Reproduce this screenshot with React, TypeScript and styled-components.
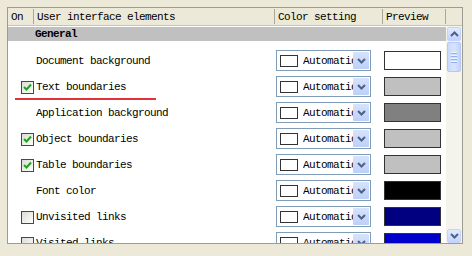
import React from 'react';
import styled, { createGlobalStyle } from 'styled-components';

const GlobalStyle = createGlobalStyle`
    body {
        margin: 0;
        background: #ECE9D8;
        font-family: "Liberation Mono", "DejaVu Sans Mono", monospace;
        font-size: 11px;
        letter-spacing: -0.6px;
        color: #000;
    }
`;

const COLUMNS = '26px 241px 108px 63px 1fr';

const Frame = styled.div`
    margin: 7px 0 0 7px;
    width: 454px;
    height: 235px;
    border: 1px solid #9C9C94;
    background: #fff;
    display: flex;
    flex-direction: column;
    overflow: hidden;
`;

const Header = styled.div`
    display: grid;
    grid-template-columns: ${COLUMNS};
    height: 17px;
    background: #ECE9D8;
    border-bottom: 1px solid #C7C5B2;
    flex-shrink: 0;
`;

const HeaderCell = styled.div<{ $last?: boolean }>`
    display: flex;
    align-items: center;
    padding-left: 3px;
    padding-top: 1px;
    border-right: ${p => (p.$last ? 'none' : '1px solid #ACA899')};
    margin: 1px 0;
    white-space: nowrap;
`;

const Body = styled.div`
    display: flex;
    flex: 1;
    min-height: 0;
`;

const List = styled.div`
    flex: 1;
    overflow: hidden;
`;

const GroupRow = styled.div`
    height: 14px;
    background: #C0C0C0;
    font-weight: bold;
    display: flex;
    align-items: center;
    padding-left: 27px;
    margin-top: 1px;
    margin-bottom: 8px;
`;

const Row = styled.div`
    display: grid;
    grid-template-columns: 26px 241px 108px 63px;
    height: 26px;
    align-items: start;
    position: relative;
`;

const CheckCell = styled.div`
    display: flex;
    justify-content: flex-end;
    padding-top: 6px;
`;

const Checkbox = styled.div`
    width: 11px;
    height: 11px;
    border: 1px solid #1C5180;
    background: linear-gradient(135deg, #DCDCD7 0%, #F4F4F0 70%, #FFFFFF 100%);
    display: flex;
    align-items: center;
    justify-content: center;
`;

const Label = styled.div`
    padding-left: 2px;
    padding-top: 6px;
    white-space: nowrap;
`;

const Underline = styled.div`
    position: absolute;
    left: 7px;
    top: 23px;
    width: 141px;
    height: 2px;
    background: #E2333A;
`;

const Combo = styled.div`
    margin-left: 1px;
    width: 93px;
    height: 19px;
    margin-top: 1px;
    border: 1px solid #7F9DB9;
    display: flex;
    align-items: center;
    overflow: hidden;
    background: #fff;
`;

const ComboSwatch = styled.div`
    width: 16px;
    height: 10px;
    border: 1px solid #333;
    margin-left: 3px;
    margin-right: 5px;
    flex-shrink: 0;
`;

const ComboText = styled.div`
    flex: 1;
    overflow: hidden;
    white-space: nowrap;
`;

const DropButton = styled.div`
    width: 16px;
    height: 17px;
    margin-right: 1px;
    background: linear-gradient(180deg, #D6E3FD 0%, #BCD0F8 100%);
    border-radius: 1px;
    display: flex;
    align-items: center;
    justify-content: center;
    flex-shrink: 0;
`;

const Swatch = styled.div<{ $color: string }>`
    margin-left: 1px;
    margin-top: 2px;
    width: 55px;
    height: 17px;
    border: 1px solid #333;
    background: ${p => p.$color};
`;

const Scrollbar = styled.div`
    width: 16px;
    background: #F5F4EC;
    display: flex;
    flex-direction: column;
    align-items: center;
    padding-top: 1px;
`;

const ScrollButton = styled.div`
    width: 14px;
    height: 14px;
    border: 1px solid #C3D3FD;
    border-radius: 2px;
    background: linear-gradient(180deg, #E1EAFE 0%, #C3D3FD 100%);
    display: flex;
    align-items: center;
    justify-content: center;
    box-sizing: border-box;
`;

const Thumb = styled.div`
    width: 14px;
    height: 30px;
    margin-top: 1px;
    border: 1px solid #B6C9F5;
    border-radius: 2px;
    background: linear-gradient(90deg, #C9D8FC 0%, #D8E4FE 50%, #C3D3FC 100%);
    display: flex;
    flex-direction: column;
    align-items: center;
    justify-content: center;
    gap: 1px;
    box-sizing: border-box;
`;

const Grip = styled.div`
    width: 6px;
    height: 1px;
    background: #EEF4FE;
    border-bottom: 1px solid #8CB0F8;
`;

const Spacer = styled.div`
    flex: 1;
`;

const Chevron = ({ up, color = '#4D6185' }: { up?: boolean; color?: string }) => (
    <svg width="9" height="6" viewBox="0 0 9 6">
        <path
            d={up ? 'M1 5 L4.5 1.5 L8 5' : 'M1 1 L4.5 4.5 L8 1'}
            fill="none"
            stroke={color}
            strokeWidth="2"
        />
    </svg>
);

const CheckMark = () => (
    <svg width="9" height="9" viewBox="0 0 9 9">
        <path d="M1 4 L3.5 6.5 L8 1.5" fill="none" stroke="#21A121" strokeWidth="2" />
    </svg>
);

type Item = { label: string; checkable: boolean; checked?: boolean; color: string; marked?: boolean };

const items: Item[] = [
    { label: 'Document background', checkable: false, color: '#FFFFFF' },
    { label: 'Text boundaries', checkable: true, checked: true, color: '#C0C0C0', marked: true },
    { label: 'Application background', checkable: false, color: '#808080' },
    { label: 'Object boundaries', checkable: true, checked: true, color: '#C0C0C0' },
    { label: 'Table boundaries', checkable: true, checked: true, color: '#C0C0C0' },
    { label: 'Font color', checkable: false, color: '#000000' },
    { label: 'Unvisited links', checkable: true, checked: false, color: '#000080' },
    { label: 'Visited links', checkable: true, checked: false, color: '#0000CC' },
];

export default function App() {
    return <>
        <GlobalStyle />
        <Frame>
            <Header>
                <HeaderCell>On</HeaderCell>
                <HeaderCell>User interface elements</HeaderCell>
                <HeaderCell>Color setting</HeaderCell>
                <HeaderCell>Preview</HeaderCell>
                <HeaderCell $last />
            </Header>
            <Body>
                <List>
                    <GroupRow>General</GroupRow>
                    {items.map((item) => (
                        <Row key={item.label}>
                            <CheckCell>
                                {item.checkable && <Checkbox>{item.checked && <CheckMark />}</Checkbox>}
                            </CheckCell>
                            <Label>{item.label}</Label>
                            <Combo>
                                <ComboSwatch />
                                <ComboText>Automatic</ComboText>
                                <DropButton><Chevron /></DropButton>
                            </Combo>
                            <Swatch $color={item.color} />
                            {item.marked && <Underline />}
                        </Row>
                    ))}
                </List>
                <Scrollbar>
                    <ScrollButton><Chevron up /></ScrollButton>
                    <Thumb><Grip /><Grip /><Grip /><Grip /></Thumb>
                    <Spacer />
                    <ScrollButton><Chevron /></ScrollButton>
                </Scrollbar>
            </Body>
        </Frame>
    </>;
}
